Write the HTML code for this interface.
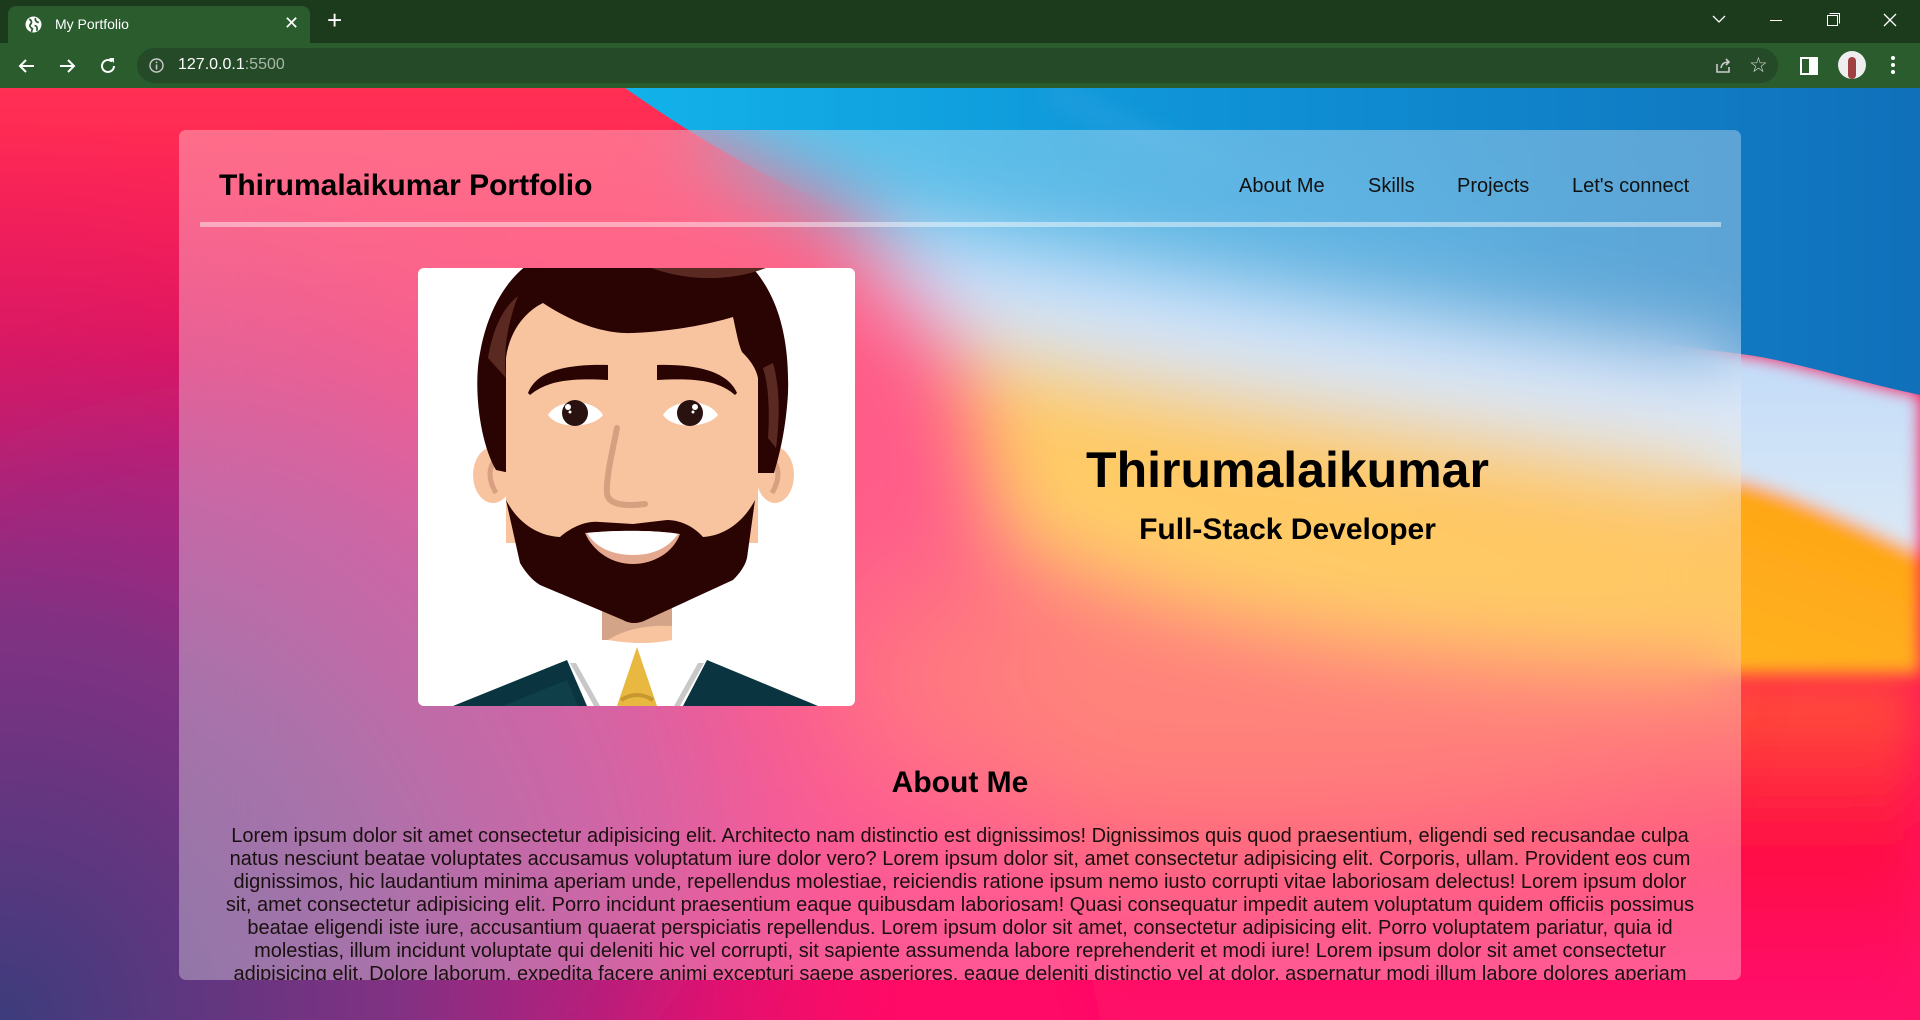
<!DOCTYPE html>
<html><head><meta charset="utf-8"><style>
*{margin:0;padding:0;box-sizing:border-box}
html,body{width:1920px;height:1020px;overflow:hidden;font-family:"Liberation Sans",Arial,sans-serif;position:relative}
#bg{position:absolute;left:0;top:0}
.chrome1{position:absolute;left:0;top:0;width:1920px;height:43px;background:#1c3a1c}
.tab{position:absolute;left:8px;top:6px;width:302px;height:37px;background:#2a5c2e;border-radius:8px 8px 0 0;color:#fff;font-size:14px}
.chrome2{position:absolute;left:0;top:43px;width:1920px;height:45px;background:#2a5c2e}
.omni{position:absolute;left:137px;top:5px;width:1641px;height:35px;background:#244a28;border-radius:18px}
.card{position:absolute;left:179px;top:130px;width:1562px;height:850px;border-radius:7px;overflow:hidden;background:rgba(255,255,255,0.32);backdrop-filter:blur(40px);-webkit-backdrop-filter:blur(40px)}
.abs{position:absolute;white-space:nowrap}
.nav{font-size:20px;color:#111;top:45px}
.para{position:absolute;left:0;width:1562px;top:695px;text-align:center;font-size:20px;line-height:23px;color:#1a1010;white-space:nowrap}
</style></head><body>
<svg id="bg" width="1920" height="1020" viewBox="0 0 1920 1020">
<defs>
<filter id="bl" x="-20%" y="-20%" width="140%" height="140%"><feGaussianBlur stdDeviation="8"/></filter>
<filter id="bl3" x="-20%" y="-20%" width="140%" height="140%"><feGaussianBlur stdDeviation="25"/></filter>
<filter id="bl2" x="-50%" y="-50%" width="200%" height="200%"><feGaussianBlur stdDeviation="60"/></filter>
<linearGradient id="blue" x1="0" y1="0" x2="1" y2="0"><stop offset="0" stop-color="#12b2ea"/><stop offset="0.5" stop-color="#0f8fd4"/><stop offset="1" stop-color="#1070ba"/></linearGradient>
<linearGradient id="lt" x1="0" y1="0" x2="0" y2="1"><stop offset="0" stop-color="#b2d2fb"/><stop offset="1" stop-color="#dbe9f6"/></linearGradient>
<linearGradient id="or" x1="1" y1="0" x2="0" y2="1"><stop offset="0" stop-color="#ff9a10"/><stop offset="1" stop-color="#ffc228"/></linearGradient>
<linearGradient id="base" x1="0" y1="0" x2="0" y2="1"><stop offset="0" stop-color="#ff3a55"/><stop offset="0.35" stop-color="#ff1050"/><stop offset="1" stop-color="#ff0a66"/></linearGradient>
<linearGradient id="red" x1="0" y1="0" x2="0" y2="1"><stop offset="0" stop-color="#ff6a35"/><stop offset="0.25" stop-color="#ff4a3a"/><stop offset="0.6" stop-color="#ff0a45"/><stop offset="1" stop-color="#ff0a70"/></linearGradient>
<radialGradient id="pur" cx="0" cy="1020" r="900" gradientUnits="userSpaceOnUse"><stop offset="0" stop-color="#3c3c7c"/><stop offset="0.45" stop-color="#7a3484" stop-opacity="0.9"/><stop offset="1" stop-color="#c01880" stop-opacity="0"/></radialGradient>
</defs>
<rect width="1920" height="1020" fill="url(#base)"/>
<path d="M1020,600 C1300,660 1600,674 1920,674 L1920,1020 L1100,1020 Z" fill="url(#red)" filter="url(#bl3)"/>
<ellipse cx="1250" cy="680" rx="420" ry="150" fill="#ff4a3c" opacity="0.9" filter="url(#bl2)"/>
<ellipse cx="250" cy="800" rx="450" ry="380" fill="#c8167e" opacity="0.8" filter="url(#bl2)"/>
<rect width="1920" height="1020" fill="url(#pur)"/>
<g filter="url(#bl)">
<path d="M950,340 C1150,390 1400,420 1741,478 C1800,495 1870,520 1920,550 L1920,674 L1741,674 C1400,665 1150,620 1000,540 Z" fill="url(#or)"/>
<path d="M850,215 C1100,250 1500,320 1741,354 C1790,360 1850,380 1920,395 L1920,552 C1850,520 1790,492 1741,480 C1400,422 1150,392 950,342 C900,300 870,260 850,215 Z" fill="url(#lt)"/>
</g>
<path d="M625,88 L1920,88 L1920,395 C1850,380 1790,360 1741,354 C1400,310 1100,260 880,222 C780,190 700,140 625,88 Z" fill="url(#blue)"/>
<path d="M1050,88 C1150,150 1300,200 1500,240" stroke="#2aa0e0" stroke-width="30" fill="none" opacity="0.4" filter="url(#bl)"/>
</svg>

<div class="chrome1">
  <div class="tab">
    <svg class="abs" style="left:17px;top:10px" width="17" height="17" viewBox="0 0 16 16"><circle cx="8" cy="8" r="7.5" fill="#fff"/><path d="M4,3 C6,4 7,6 5,8 C4,9 5,11 7,12 L6,15 M10,2 C9,4 11,6 13,6 M9,9 C11,9 12,11 11,14" stroke="#2a5c2e" stroke-width="1.6" fill="none"/></svg>
    <span class="abs" style="left:47px;top:10px">My Portfolio</span>
    <span class="abs" style="left:276px;top:7px;font-size:18px">✕</span>
  </div>
  <span class="abs" style="left:327px;top:6px;color:#fff;font-size:26px;line-height:28px">+</span>
  <svg class="abs" style="left:1712px;top:14px" width="14" height="10"><path d="M1,2 L7,8 L13,2" stroke="#fff" stroke-width="1.3" fill="none"/></svg>
  <div class="abs" style="left:1770px;top:20px;width:12px;height:1px;background:#fff"></div>
  <svg class="abs" style="left:1827px;top:13px" width="13" height="13"><rect x="0.5" y="2.5" width="10" height="10" stroke="#fff" fill="none"/><path d="M2.5,0.5 H12.5 V10.5" stroke="#fff" fill="none"/></svg>
  <svg class="abs" style="left:1883px;top:13px" width="14" height="14"><path d="M1,1 L13,13 M13,1 L1,13" stroke="#fff" stroke-width="1.3"/></svg>
</div>
<div class="chrome2">
  <svg class="abs" style="left:17px;top:13px" width="20" height="20"><path d="M17,10 H3 M9,4 L3,10 L9,16" stroke="#fff" stroke-width="2" fill="none"/></svg>
  <svg class="abs" style="left:57px;top:13px" width="20" height="20"><path d="M3,10 H17 M11,4 L17,10 L11,16" stroke="#fff" stroke-width="2" fill="none"/></svg>
  <svg class="abs" style="left:98px;top:13px" width="20" height="20"><path d="M16,10 A6,6 0 1 1 14,5.5" stroke="#fff" stroke-width="2" fill="none"/><path d="M11,2 L16,2 L16,7 Z" fill="#fff"/></svg>
  <div class="omni">
    <svg class="abs" style="left:12px;top:10px" width="15" height="15"><circle cx="7.5" cy="7.5" r="6.5" stroke="#ccc" stroke-width="1.4" fill="none"/><rect x="6.8" y="6.5" width="1.5" height="5" fill="#ccc"/><rect x="6.8" y="3.5" width="1.5" height="1.6" fill="#ccc"/></svg>
    <span class="abs" style="left:41px;top:8px;font-size:16px;color:#fff">127.0.0.1<span style="color:#a8b8a8">:5500</span></span>
    <svg class="abs" style="left:1576px;top:8px" width="20" height="20"><path d="M4,8 V16 H16 V11 M8,12 C9,7 12,6 16,6 M13,3 L16,6 L13,9" stroke="#ccc" stroke-width="1.6" fill="none"/></svg>
    <span class="abs" style="left:1612px;top:5px;font-size:21px;color:#ddd">☆</span>
  </div>
  <svg class="abs" style="left:1800px;top:14px" width="18" height="18"><rect x="1" y="1" width="16" height="16" stroke="#fff" stroke-width="2" fill="none"/><rect x="9" y="1" width="8" height="16" fill="#fff"/></svg>
  <div class="abs" style="left:1838px;top:8px;width:28px;height:28px;border-radius:50%;background:#eee;overflow:hidden"><div style="margin:6px 0 0 10px;width:8px;height:22px;background:#a04040;border-radius:4px"></div></div>
  <div class="abs" style="left:1891px;top:13px;width:4px;height:4px;border-radius:2px;background:#fff;box-shadow:0 7px 0 #fff,0 14px 0 #fff"></div>
</div>

<div class="card">
  <div class="abs" style="left:40px;top:39px;font-size:30px;font-weight:bold;color:#000">Thirumalaikumar Portfolio</div>
  <div class="abs nav" style="left:1060px">About Me</div>
  <div class="abs nav" style="left:1189px">Skills</div>
  <div class="abs nav" style="left:1278px">Projects</div>
  <div class="abs nav" style="left:1393px">Let's connect</div>
  <div class="abs" style="left:21px;top:92px;width:1521px;height:5px;background:rgba(255,255,255,0.45)"></div>

  <div class="abs" style="left:239px;top:138px;width:437px;height:438px;background:#fff;border-radius:6px;overflow:hidden">
  <svg width="437" height="438" viewBox="0 0 437 438">
    <path d="M35,438 L149,392 L169,438 Z" fill="#0a3440"/>
    <path d="M289,392 L400,438 L265,438 Z" fill="#0a3440"/>
    <path d="M85,438 L149,412 L160,438Z" fill="#134a52" opacity="0.6"/>
    <path d="M152,395 L176,438 L182,438 L158,395Z" fill="#c8c8c8"/>
    <path d="M286,395 L262,438 L256,438 L280,395Z" fill="#c8c8c8"/>
    <path d="M219,379 L199,438 L239,438 Z" fill="#e8b840"/>
    <path d="M203,432 Q219,422 235,432" stroke="#c89830" stroke-width="4" fill="none"/>
    <rect x="184" y="330" width="70" height="42" fill="#d4a488"/>
    <path d="M190,372 Q215,356 254,358 L254,372 Q225,378 190,372Z" fill="#f8c4a0"/>
    <ellipse cx="75" cy="207" rx="20" ry="28" fill="#f8c4a0"/>
    <path d="M78,190 Q66,205 78,225" stroke="#d8a080" stroke-width="5" fill="none"/>
    <ellipse cx="357" cy="207" rx="19" ry="28" fill="#f8c4a0"/>
    <path d="M354,190 Q366,205 354,225" stroke="#d8a080" stroke-width="5" fill="none"/>
    <path d="M92,205 L78,202 C62,175 55,120 62,85 C70,40 90,10 112,-5 L330,-5 C355,20 372,60 370,125 C368,160 362,185 356,205 L340,205 Z" fill="#2a0303"/>
    <path d="M70,90 C75,60 85,40 100,28 C90,55 85,80 88,110 Z" fill="#5a2a22"/>
    <path d="M355,95 C362,120 362,150 358,180 L350,170 C352,140 350,115 345,100Z" fill="#5a2a22"/>
    <path d="M215,-8 C250,10 300,18 348,0 L350,-8 Z" fill="#5a2a22"/>
    <path d="M88,90 C92,60 110,42 125,35 C160,58 190,66 215,65 C260,63 295,55 315,49 C318,62 320,75 324,84 C332,92 338,100 340,110 L340,275 L88,275 Z" fill="#f8c4a0"/>
    <path d="M110,125 C118,104 145,96 190,97 L190,112 C155,110 130,112 112,127 Z" fill="#2a0303"/>
    <path d="M239,97 C280,96 310,104 319,125 L317,127 C300,112 275,110 239,112 Z" fill="#2a0303"/>
    <path d="M130,147 C140,130 175,130 185,147 C175,160 140,162 130,147Z" fill="#fff"/>
    <circle cx="157" cy="145" r="13" fill="#2a1210"/>
    <circle cx="150" cy="139" r="3" fill="#fff"/><circle cx="152" cy="144" r="1.5" fill="#fff"/>
    <path d="M245,147 C255,130 290,130 300,147 C290,160 255,162 245,147Z" fill="#fff"/>
    <circle cx="272" cy="145" r="13" fill="#2a1210"/>
    <circle cx="277" cy="139" r="3" fill="#fff"/><circle cx="275" cy="144" r="1.5" fill="#fff"/>
    <path d="M199,160 C194,185 188,210 189,225 C190,238 210,238 227,236" stroke="#d4a080" stroke-width="6" fill="none" stroke-linecap="round"/>
    <path d="M88,232 L102,295 C108,305 114,312 122,317 L205,352 C212,356 220,356 228,352 L315,312 C322,305 327,298 329,290 L337,232 C325,255 305,268 285,269 C275,258 262,252 249,252 L215,256 L182,254 C168,252 152,260 142,269 C120,268 100,255 88,232 Z" fill="#2a0303"/>
    <path d="M167,265 C195,262 240,262 262,266 C255,285 235,296 215,296 C195,296 176,285 167,265 Z" fill="#e4a88e"/>
    <path d="M169,265 C195,262 240,262 260,266 C250,280 235,287 215,287 C195,287 178,280 169,265 Z" fill="#fff"/>
  </svg>
  </div>

  <div class="abs" style="left:500px;width:1217px;text-align:center;top:311px;font-size:50px;font-weight:bold;color:#000">Thirumalaikumar</div>
  <div class="abs" style="left:500px;width:1217px;text-align:center;top:383px;font-size:30px;font-weight:bold;color:#000">Full-Stack Developer</div>

  <div class="abs" style="left:0;width:1562px;text-align:center;top:636px;font-size:30px;font-weight:bold;color:#000">About Me</div>
  <div class="para">Lorem ipsum dolor sit amet consectetur adipisicing elit. Architecto nam distinctio est dignissimos! Dignissimos quis quod praesentium, eligendi sed recusandae culpa<br>natus nesciunt beatae voluptates accusamus voluptatum iure dolor vero? Lorem ipsum dolor sit, amet consectetur adipisicing elit. Corporis, ullam. Provident eos cum<br>dignissimos, hic laudantium minima aperiam unde, repellendus molestiae, reiciendis ratione ipsum nemo iusto corrupti vitae laboriosam delectus! Lorem ipsum dolor<br>sit, amet consectetur adipisicing elit. Porro incidunt praesentium eaque quibusdam laboriosam! Quasi consequatur impedit autem voluptatum quidem officiis possimus<br>beatae eligendi iste iure, accusantium quaerat perspiciatis repellendus. Lorem ipsum dolor sit amet, consectetur adipisicing elit. Porro voluptatem pariatur, quia id<br>molestias, illum incidunt voluptate qui deleniti hic vel corrupti, sit sapiente assumenda labore reprehenderit et modi iure! Lorem ipsum dolor sit amet consectetur<br>adipisicing elit. Dolore laborum, expedita facere animi excepturi saepe asperiores, eaque deleniti distinctio vel at dolor, aspernatur modi illum labore dolores aperiam</div>
</div>
</body></html>
